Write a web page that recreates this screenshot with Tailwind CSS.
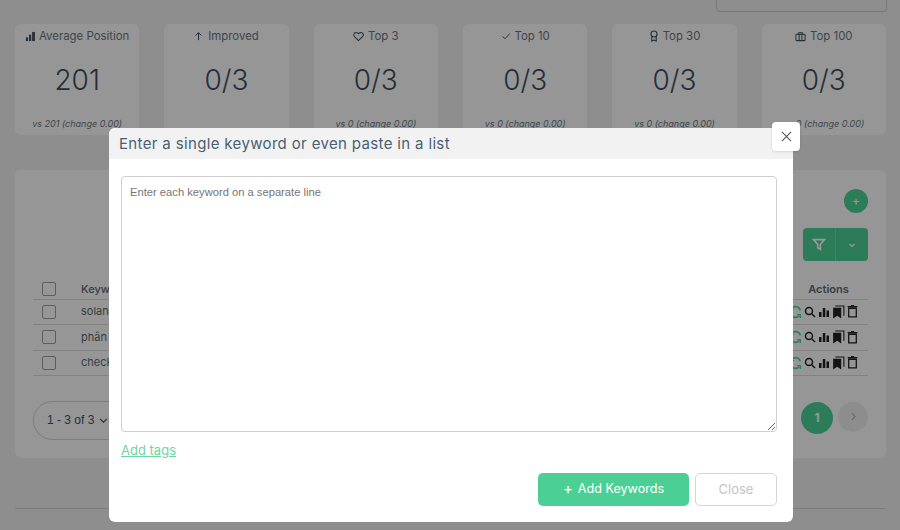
<!DOCTYPE html>
<html lang="en">
  <head>
    <meta charset="UTF-8" />
    <title>Keywords</title>
    <script src="https://cdn.jsdelivr.net/npm/@tailwindcss/browser@4"></script>
  </head>
  <body class="w-[900px] h-[530px] overflow-hidden relative bg-[#ededed] font-['Inter',sans-serif] text-[#3d4f5f]">
    <!-- Page behind the modal -->
    <div class="pl-[15px] pr-[14px]">
      <div class="flex justify-end">
        <div class="w-[171px] h-[12px] -mr-px border border-t-0 border-[#c8c8c8] rounded-b bg-[#ededed]"></div>
      </div>

      <!-- Stat cards -->
      <div class="grid grid-cols-6 gap-x-[25px] mt-[12px]">
        <div class="h-[111px] bg-[#fbfbfb] rounded-md flex flex-col items-center pt-[5px]">
          <div class="flex items-center gap-[3px] text-[11.4px] leading-[14px] text-[#68747f]">
            <svg class="w-[11px] h-[11px]" viewBox="0 0 12 12" fill="#3d4f5f"><rect x="1" y="7" width="2.400" height="4"/><rect x="4.400" y="4" width="2.400" height="7"/><rect x="7.800" y="1" width="3" height="10"/></svg>
            <span>Average Position</span>
          </div>
          <div class="mt-[19px] text-[28px] leading-[36px] font-light text-[#3d4f5f]">201</div>
          <div class="mt-auto pb-[5px] text-[9px] leading-[12px] italic text-[#68747f]">vs 201 (change 0.00)</div>
        </div>
        <div class="h-[111px] bg-[#fbfbfb] rounded-md flex flex-col items-center pt-[5px]">
          <div class="flex items-center gap-[5px] text-[11.4px] leading-[14px] text-[#68747f]">
            <svg class="w-[9px] h-[10px]" viewBox="0 0 10 12" fill="none" stroke="#3d4f5f" stroke-width="1.200"><path d="M5 11V2M1.500 5.500 5 2l3.500 3.500"/></svg>
            <span>Improved</span>
          </div>
          <div class="mt-[19px] text-[28px] leading-[36px] font-light text-[#3d4f5f]">0/3</div>
        </div>
        <div class="h-[111px] bg-[#fbfbfb] rounded-md flex flex-col items-center pt-[5px]">
          <div class="flex items-center gap-[4px] text-[11.4px] leading-[14px] text-[#68747f]">
            <svg class="w-[11px] h-[11px]" viewBox="0 0 12 12" fill="none" stroke="#3d4f5f" stroke-width="1.100"><path d="M6 10.500 1.600 6.100a2.600 2.600 0 0 1 3.700-3.700l.7.7.7-.7a2.600 2.600 0 0 1 3.700 3.700z"/></svg>
            <span>Top 3</span>
          </div>
          <div class="mt-[19px] text-[28px] leading-[36px] font-light text-[#3d4f5f]">0/3</div>
          <div class="mt-auto pb-[5px] text-[9px] leading-[12px] italic text-[#68747f]">vs 0 (change 0.00)</div>
        </div>
        <div class="h-[111px] bg-[#fbfbfb] rounded-md flex flex-col items-center pt-[5px]">
          <div class="flex items-center gap-[4px] text-[11.4px] leading-[14px] text-[#68747f]">
            <svg class="w-[10px] h-[10px]" viewBox="0 0 12 12" fill="none" stroke="#3d4f5f" stroke-width="1.100"><path d="m2 6.500 2.800 2.800L10.500 3"/></svg>
            <span>Top 10</span>
          </div>
          <div class="mt-[19px] text-[28px] leading-[36px] font-light text-[#3d4f5f]">0/3</div>
          <div class="mt-auto pb-[5px] text-[9px] leading-[12px] italic text-[#68747f]">vs 0 (change 0.00)</div>
        </div>
        <div class="h-[111px] bg-[#fbfbfb] rounded-md flex flex-col items-center pt-[5px]">
          <div class="flex items-center gap-[4px] text-[11.4px] leading-[14px] text-[#68747f]">
            <svg class="w-[10px] h-[12px]" viewBox="0 0 10 12" fill="none" stroke="#3d4f5f" stroke-width="1.100"><circle cx="5" cy="4" r="3"/><path d="M2.800 6.500v4.600L5 10l2.200 1.100V6.500"/></svg>
            <span>Top 30</span>
          </div>
          <div class="mt-[19px] text-[28px] leading-[36px] font-light text-[#3d4f5f]">0/3</div>
          <div class="mt-auto pb-[5px] text-[9px] leading-[12px] italic text-[#68747f]">vs 0 (change 0.00)</div>
        </div>
        <div class="h-[111px] bg-[#fbfbfb] rounded-md flex flex-col items-center pt-[5px]">
          <div class="flex items-center gap-[4px] text-[11.4px] leading-[14px] text-[#68747f]">
            <svg class="w-[11px] h-[11px]" viewBox="0 0 12 12" fill="none" stroke="#3d4f5f" stroke-width="1.100"><rect x="1" y="3.500" width="10" height="7" rx="1"/><path d="M4 3.500V1.800h4v1.700M4.500 3.500v7M7.500 3.500v7"/></svg>
            <span>Top 100</span>
          </div>
          <div class="mt-[19px] text-[28px] leading-[36px] font-light text-[#3d4f5f]">0/3</div>
          <div class="mt-auto pb-[5px] text-[9px] leading-[12px] italic text-[#68747f]">vs 0 (change 0.00)</div>
        </div>
      </div>

      <!-- Keyword table panel -->
      <div class="mt-[35px] h-[288px] bg-[#fbfbfb] rounded-md pl-[18px] pr-[18px] pt-[19px]">
        <div class="flex justify-end">
          <div class="w-[24px] h-[24px] rounded-full bg-[#4ccf95] text-white flex items-center justify-center text-[12px]">+</div>
        </div>
        <div class="flex justify-end mt-[15px]">
          <div class="w-[65px] h-[33px] rounded bg-[#4ccf95] flex">
            <div class="w-[33px] flex items-center justify-center border-r border-[#6fdaaa]">
              <svg class="w-[14px] h-[13px]" viewBox="0 0 12 12" fill="none" stroke="#fff" stroke-width="1.500"><path d="M1 1.500h10L7.200 6v4.500L4.800 9V6z"/></svg>
            </div>
            <div class="flex-1 flex items-center justify-center">
              <svg class="w-[8px] h-[8px]" viewBox="0 0 8 8" fill="none" stroke="#fff" stroke-width="1.200"><path d="m1.500 3 2.500 2.500L6.500 3"/></svg>
            </div>
          </div>
        </div>
        <table class="w-full mt-[18px] text-[11px] text-[#5a6672] border-collapse">
          <tbody>
            <tr class="h-[20px] border-b border-[#d8d8d8]">
              <td class="w-[48px] pl-[9px]"><div class="w-[14px] h-[14px] border-[1.5px] border-[#9c9c9c] rounded-[2px]"></div></td>
              <td class="font-medium">Keyword</td>
              <td class="w-[76px] text-center font-semibold">Actions</td>
            </tr>
            <tr class="h-[25px] border-b border-[#d8d8d8]">
              <td class="pl-[9px]"><div class="w-[14px] h-[14px] border-[1.5px] border-[#9c9c9c] rounded-[2px]"></div></td>
              <td>solan</td>
              <td>
                <div class="flex items-center gap-[2px] justify-center pr-[10px]">
                  <svg class="w-[13px] h-[14px]" viewBox="0 0 12 13" fill="none" stroke="#4ccf95" stroke-width="1.600"><path d="M10.500 5A4.700 4.700 0 0 0 2.500 3M1.500 8a4.700 4.700 0 0 0 8 2"/><path d="M1.500 1v3h3M10.500 12V9h-3" stroke-width="1.200"/></svg>
                  <svg class="w-[12px] h-[12px]" viewBox="0 0 12 12" fill="none" stroke="#222" stroke-width="1.500"><circle cx="5" cy="5" r="3.500"/><path d="m8 8 3 3"/></svg>
                  <svg class="w-[12px] h-[12px]" viewBox="0 0 12 12" fill="#222"><rect x="1" y="6" width="2.500" height="5"/><rect x="4.800" y="2" width="2.500" height="9"/><rect x="8.500" y="4.500" width="2.500" height="6.500"/></svg>
                  <svg class="w-[13px] h-[14px]" viewBox="0 0 12 13" fill="#222"><path d="M1 2.500h7.500v10L4.800 10 1 12.500z"/><path d="M3 1h8v9" fill="none" stroke="#222"/></svg>
                  <svg class="w-[11px] h-[13px]" viewBox="0 0 10 12" fill="none" stroke="#222" stroke-width="1.200"><path d="M1.500 3h7v8h-7zM.5 1.500h9M3.500.6h3"/></svg>
                </div>
              </td>
            </tr>
            <tr class="h-[26px] border-b border-[#d8d8d8]">
              <td class="pl-[9px]"><div class="w-[14px] h-[14px] border-[1.5px] border-[#9c9c9c] rounded-[2px]"></div></td>
              <td>phân</td>
              <td>
                <div class="flex items-center gap-[2px] justify-center pr-[10px]">
                  <svg class="w-[13px] h-[14px]" viewBox="0 0 12 13" fill="none" stroke="#4ccf95" stroke-width="1.600"><path d="M10.500 5A4.700 4.700 0 0 0 2.500 3M1.500 8a4.700 4.700 0 0 0 8 2"/><path d="M1.500 1v3h3M10.500 12V9h-3" stroke-width="1.200"/></svg>
                  <svg class="w-[12px] h-[12px]" viewBox="0 0 12 12" fill="none" stroke="#222" stroke-width="1.500"><circle cx="5" cy="5" r="3.500"/><path d="m8 8 3 3"/></svg>
                  <svg class="w-[12px] h-[12px]" viewBox="0 0 12 12" fill="#222"><rect x="1" y="6" width="2.500" height="5"/><rect x="4.800" y="2" width="2.500" height="9"/><rect x="8.500" y="4.500" width="2.500" height="6.500"/></svg>
                  <svg class="w-[13px] h-[14px]" viewBox="0 0 12 13" fill="#222"><path d="M1 2.500h7.500v10L4.800 10 1 12.500z"/><path d="M3 1h8v9" fill="none" stroke="#222"/></svg>
                  <svg class="w-[11px] h-[13px]" viewBox="0 0 10 12" fill="none" stroke="#222" stroke-width="1.200"><path d="M1.500 3h7v8h-7zM.5 1.500h9M3.500.6h3"/></svg>
                </div>
              </td>
            </tr>
            <tr class="h-[25px] border-b border-[#d8d8d8]">
              <td class="pl-[9px]"><div class="w-[14px] h-[14px] border-[1.5px] border-[#9c9c9c] rounded-[2px]"></div></td>
              <td>check</td>
              <td>
                <div class="flex items-center gap-[2px] justify-center pr-[10px]">
                  <svg class="w-[13px] h-[14px]" viewBox="0 0 12 13" fill="none" stroke="#4ccf95" stroke-width="1.600"><path d="M10.500 5A4.700 4.700 0 0 0 2.500 3M1.500 8a4.700 4.700 0 0 0 8 2"/><path d="M1.500 1v3h3M10.500 12V9h-3" stroke-width="1.200"/></svg>
                  <svg class="w-[12px] h-[12px]" viewBox="0 0 12 12" fill="none" stroke="#222" stroke-width="1.500"><circle cx="5" cy="5" r="3.500"/><path d="m8 8 3 3"/></svg>
                  <svg class="w-[12px] h-[12px]" viewBox="0 0 12 12" fill="#222"><rect x="1" y="6" width="2.500" height="5"/><rect x="4.800" y="2" width="2.500" height="9"/><rect x="8.500" y="4.500" width="2.500" height="6.500"/></svg>
                  <svg class="w-[13px] h-[14px]" viewBox="0 0 12 13" fill="#222"><path d="M1 2.500h7.500v10L4.800 10 1 12.500z"/><path d="M3 1h8v9" fill="none" stroke="#222"/></svg>
                  <svg class="w-[11px] h-[13px]" viewBox="0 0 10 12" fill="none" stroke="#222" stroke-width="1.200"><path d="M1.500 3h7v8h-7zM.5 1.500h9M3.500.6h3"/></svg>
                </div>
              </td>
            </tr>
          </tbody>
        </table>
        <div class="flex justify-between items-start mt-[25px]">
          <div class="w-[110px] h-[39px] rounded-full border border-[#d0d0d0] flex items-center pl-[13px] gap-[5px] text-[12px] font-['Liberation_Sans',sans-serif]">
            <span>1 - 3 of 3</span>
            <svg class="w-[9px] h-[9px]" viewBox="0 0 8 8" fill="none" stroke="#3d4f5f" stroke-width="1"><path d="m1 2.500 3 3 3-3"/></svg>
          </div>
          <div class="flex gap-[5px] mt-px">
            <div class="w-[32px] h-[32px] rounded-full bg-[#4ccf95] text-white text-[12px] font-bold flex items-center justify-center">1</div>
            <div class="w-[30px] h-[30px] rounded-full bg-[#ececec] flex items-center justify-center">
              <svg class="w-[9px] h-[9px]" viewBox="0 0 8 8" fill="none" stroke="#aaa" stroke-width="1"><path d="m2.500 1 3 3-3 3"/></svg>
            </div>
          </div>
        </div>
      </div>
      <div class="mt-[50px] border-t border-[#d0d0d0]"></div>
    </div>

    <!-- Backdrop -->
    <div class="absolute inset-0 bg-black/40"></div>

    <!-- Modal -->
    <div class="absolute left-[109px] top-[128px] w-[684px] h-[394px] bg-white rounded-md flex flex-col">
      <div class="h-[31px] bg-[#f2f2f2] rounded-t-md pl-[10px] pt-[1px] flex items-center text-[15px] text-[#4a6072] tracking-[0.35px]">Enter a single keyword or even paste in a list</div>
      <div class="pl-[12px] pr-[16px] pt-[17px] flex-1 flex flex-col">
        <textarea placeholder="Enter each keyword on a separate line" class="h-[256px] w-full border border-[#cfcfcf] rounded-[4px] px-[8px] py-[8px] text-[11.2px] leading-[15px] font-['Liberation_Sans',sans-serif] placeholder:text-[#757575]"></textarea>
        <div class="mt-[5px] h-[16px]"><a class="text-[13px] leading-[16px] text-[#6fd3a8] underline">Add tags</a></div>
        <div class="flex justify-end gap-[6px] mt-[20px]">
          <button class="w-[151px] h-[33px] rounded-[5px] bg-[#4ccf95] text-white text-[12.6px] flex items-center justify-center gap-[5px]"><span class="text-[15px]">+</span> Add Keywords</button>
          <button class="w-[82px] h-[33px] rounded-[5px] border border-[#d5d5d5] text-[#c4c4c4] text-[13px]">Close</button>
        </div>
      </div>
      <button class="absolute left-[663px] top-[-6px] w-[28px] h-[29px] bg-white rounded flex items-center justify-center shadow-sm">
        <svg class="w-[11px] h-[11px]" viewBox="0 0 12 12" fill="none" stroke="#555" stroke-width="1.200"><path d="m1 1 10 10M11 1 1 11"/></svg>
      </button>
    </div>
  </body>
</html>
